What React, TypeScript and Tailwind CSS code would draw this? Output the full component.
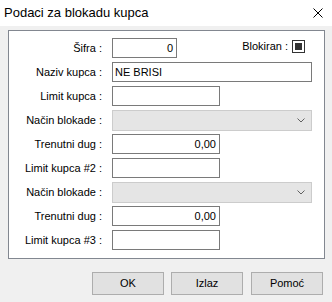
import React from "react";

const font = { fontFamily: '"Liberation Sans", Arial, sans-serif' };

function Label({ children }: { children: React.ReactNode }) {
  return (
    <div className="w-[94px] shrink-0 text-right text-[11px] leading-[20px] text-black pr-[1px]">
      {children}
    </div>
  );
}

function Input({ w, value, right }: { w: string; value?: string; right?: boolean }) {
  return (
    <div
      className={`${w} h-[20px] border border-[#7a7a7a] bg-white text-[11px] leading-[18px] text-black px-[2px] ${
        right ? "text-right pr-[3px]" : "text-left"
      }`}
    >
      {value}
    </div>
  );
}

function Combo() {
  return (
    <div className="w-[200px] h-[21px] border border-[#cccccc] bg-[#e5e5e5] flex items-center justify-end pr-[6px]">
      <svg width="8" height="5" viewBox="0 0 8 5">
        <path d="M0.5 0.5 L4 4 L7.5 0.5" fill="none" stroke="#606060" strokeWidth="1" />
      </svg>
    </div>
  );
}

function Row({ children }: { children: React.ReactNode }) {
  return <div className="h-[24px] flex items-start">{children}</div>;
}

function Button({ children }: { children: React.ReactNode }) {
  return (
    <div className="w-[72px] h-[23px] border border-[#adadad] bg-[#e1e1e1] flex items-center justify-center text-[11px] text-black">
      {children}
    </div>
  );
}

export default function App() {
  return (
    <div className="w-[332px] h-[302px] bg-[#f0f0f0] flex flex-col" style={font}>
      <div className="h-[26px] bg-white flex items-center justify-between pl-[4px] pr-[9px]">
        <span className="text-[13px] text-black">Podaci za blokadu kupca</span>
        <svg width="10" height="10" viewBox="0 0 10 10">
          <path d="M0.5 0.5 L9.5 9.5 M9.5 0.5 L0.5 9.5" stroke="#000" strokeWidth="1" />
        </svg>
      </div>
      <div className="ml-[8px] mt-[4px] w-[317px] h-[229px] border border-[#828790] bg-white pt-[7px] flex flex-col">
        <Row>
          <Label>Šifra :</Label>
          <div className="ml-[9px]">
            <Input w="w-[65px]" value="0" right />
          </div>
          <div className="ml-auto mr-[19px] flex items-center h-[20px] mt-[-2px]">
            <span className="text-[11px] text-black mr-[4px]">Blokiran :</span>
            <div className="w-[13px] h-[13px] border border-[#333333] bg-white flex items-center justify-center">
              <div className="w-[7px] h-[7px] bg-[#333333]" />
            </div>
          </div>
        </Row>
        <Row>
          <Label>Naziv kupca :</Label>
          <div className="ml-[9px]">
            <Input w="w-[200px]" value="NE BRISI" />
          </div>
        </Row>
        <Row>
          <Label>Limit kupca :</Label>
          <div className="ml-[9px]">
            <Input w="w-[108px]" />
          </div>
        </Row>
        <Row>
          <Label>Način blokade :</Label>
          <div className="ml-[9px]">
            <Combo />
          </div>
        </Row>
        <Row>
          <Label>Trenutni dug :</Label>
          <div className="ml-[9px]">
            <Input w="w-[108px]" value="0,00" right />
          </div>
        </Row>
        <Row>
          <Label>Limit kupca #2 :</Label>
          <div className="ml-[9px]">
            <Input w="w-[108px]" />
          </div>
        </Row>
        <Row>
          <Label>Način blokade :</Label>
          <div className="ml-[9px]">
            <Combo />
          </div>
        </Row>
        <Row>
          <Label>Trenutni dug :</Label>
          <div className="ml-[9px]">
            <Input w="w-[108px]" value="0,00" right />
          </div>
        </Row>
        <Row>
          <Label>Limit kupca #3 :</Label>
          <div className="ml-[9px]">
            <Input w="w-[108px]" />
          </div>
        </Row>
      </div>
      <div className="mt-[13px] flex pl-[92px] gap-[7px]">
        <Button>OK</Button>
        <Button>Izlaz</Button>
        <div className="ml-[1px]">
          <Button>Pomoć</Button>
        </div>
      </div>
    </div>
  );
}
